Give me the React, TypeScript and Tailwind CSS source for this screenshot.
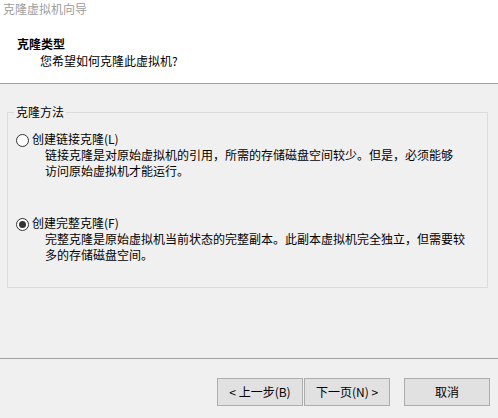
import React from 'react';

const Radio = ({ checked }: { checked?: boolean }) => (
  <span className="mt-[3px] flex h-[13px] w-[13px] shrink-0 items-center justify-center rounded-full border border-[#333333] bg-white">
    {checked && <span className="h-[7px] w-[7px] rounded-full bg-[#333333]" />}
  </span>
);

const Option = ({
  label,
  lines,
  checked,
  className = '',
}: {
  label: string;
  lines: string[];
  checked?: boolean;
  className?: string;
}) => (
  <div className={className}>
    <div className="flex items-start gap-[3px] leading-[14px]">
      <Radio checked={checked} />
      <span className="mt-[1px]">{label}</span>
    </div>
    <div className="pl-[29px] leading-[16px]">
      {lines.map((l) => (
        <div key={l}>{l}</div>
      ))}
    </div>
  </div>
);

export default function App() {
  return (
    <div className="flex h-[418px] w-[498px] flex-col bg-[#f0f0f0] font-['Noto_Sans_CJK_SC',sans-serif] text-[12px] text-black">
      <div className="h-[84px] border-b border-[#a0a0a0] bg-white">
        <div className="pl-[3px] pt-[1px] leading-[16px] text-[#9d9d9d]">克隆虚拟机向导</div>
        <div className="mt-[19px] pl-[17px] font-bold leading-[16px]">克隆类型</div>
        <div className="mt-[1px] pl-[40px] leading-[16px]">您希望如何克隆此虚拟机?</div>
      </div>

      <div className="relative ml-[7px] mt-[28px] h-[176px] w-[481px] border border-[#dcdcdc] pl-[8px] pt-[18px]">
        <span className="absolute -top-[9px] left-[6px] bg-[#f0f0f0] px-[2px] leading-[16px]">克隆方法</span>
        <Option
          label="创建链接克隆(L)"
          lines={['链接克隆是对原始虚拟机的引用，所需的存储磁盘空间较少。但是，必须能够', '访问原始虚拟机才能运行。']}
        />
        <Option
          className="mt-[36px]"
          checked
          label="创建完整克隆(F)"
          lines={['完整克隆是原始虚拟机当前状态的完整副本。此副本虚拟机完全独立，但需要较', '多的存储磁盘空间。']}
        />
      </div>

      <div className="mt-[70px] border-t border-[#a0a0a0]" />

      <div className="mt-[19px] flex pl-[217px]">
        <button className="h-[28px] w-[86px] border border-[#adadad] bg-[#e1e1e1] text-[12px]">&lt; 上一步(B)</button>
        <button className="ml-[1px] h-[28px] w-[86px] border border-[#adadad] bg-[#e1e1e1] text-[12px]">下一页(N) &gt;</button>
        <button className="ml-[14px] h-[28px] w-[86px] border border-[#adadad] bg-[#e1e1e1] text-[12px]">取消</button>
      </div>
    </div>
  );
}
